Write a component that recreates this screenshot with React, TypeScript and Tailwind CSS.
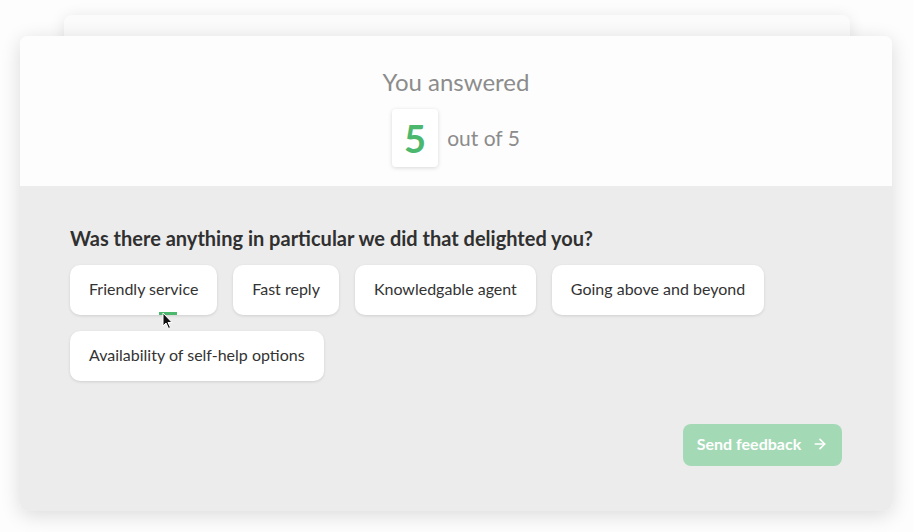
import { ArrowRight } from "lucide-react";

const options = [
  "Friendly service",
  "Fast reply",
  "Knowledgable agent",
  "Going above and beyond",
  "Availability of self-help options",
];

const Cursor = () => (
  <svg width="12" height="18" viewBox="0 0 12 18" className="absolute left-[162px] top-[312px]">
    <path d="M1 1 L1 14 L4 11 L6.5 16.5 L8.5 15.5 L6 10.5 L10 10.5 Z" fill="#111" stroke="#fff" strokeWidth="1" />
  </svg>
);

export default function App() {
  return (
    <div className="relative w-[914px] h-[532px] bg-[#fdfdfd] overflow-hidden font-['Lato','Noto_Sans',sans-serif]">
      <div className="px-[64px] pt-[15px]">
        <div className="h-[40px] rounded-t-lg bg-[#fbfbfb] shadow-[0_2px_16px_rgba(0,0,0,0.1)]" />
      </div>
      <div className="absolute left-[20px] top-[36px] w-[872px] h-[475px] rounded-lg overflow-hidden shadow-[0_4px_20px_rgba(0,0,0,0.14)] flex flex-col">
        <div className="h-[150px] bg-[#fdfdfd] flex flex-col items-center pt-[31px]">
          <div className="text-[24px] leading-[30px] text-[#8c8c8c]">You answered</div>
          <div className="mt-[12px] flex items-center gap-[9px]">
            <div className="w-[46px] h-[58px] rounded bg-white shadow-[0_1px_4px_rgba(0,0,0,0.15)] flex items-center justify-center text-[38px] font-bold text-[#4cb86e]">
              5
            </div>
            <span className="text-[21px] text-[#8c8c8c]">out of 5</span>
          </div>
        </div>
        <div className="flex-1 bg-[#ececec] px-[50px] pt-[39px]">
          <h2 className="text-[20px] leading-[26px] font-bold text-[#303030]">
            Was there anything in particular we did that delighted you?
          </h2>
          <div className="mt-[14px] flex flex-wrap gap-[16px] w-[720px]">
            {options.map((o) => (
              <button
                key={o}
                className="h-[50px] px-[19px] pb-[2px] rounded-[10px] bg-white text-[16px] text-[#333] shadow-[0_1px_3px_rgba(0,0,0,0.12)]"
              >
                {o}
              </button>
            ))}
          </div>
          <div className="flex justify-end mt-[43px]">
            <button className="h-[42px] w-[159px] pb-[2px] rounded-lg bg-[#a4d9b6] text-white text-[16px] font-bold flex items-center justify-center gap-[11px]">
              Send feedback
              <ArrowRight className="w-4 h-4" strokeWidth={2.5} />
            </button>
          </div>
        </div>
      </div>
      <div className="absolute left-[159px] top-[312px] w-[18px] h-[3px] bg-[#4cb86e]" />
      <Cursor />
    </div>
  );
}
